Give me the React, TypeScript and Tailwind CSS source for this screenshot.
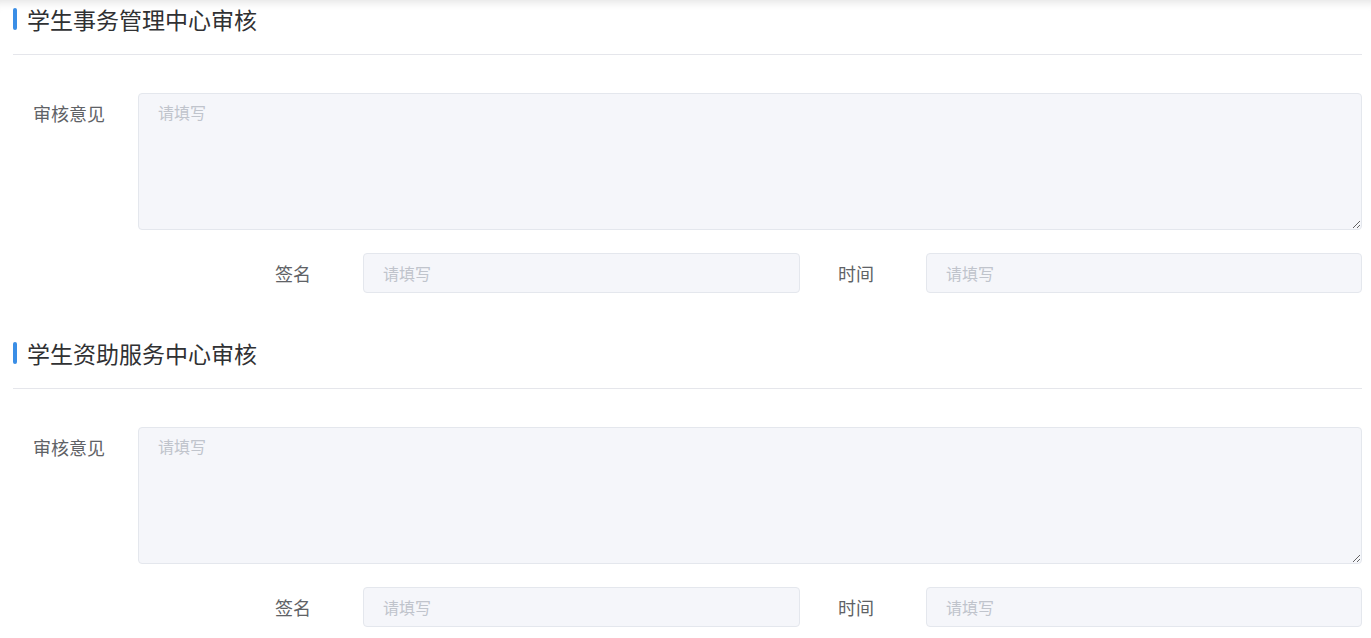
import React from 'react';

const font = { fontFamily: '"Noto Sans CJK SC", "Noto Sans", sans-serif' };

function Field({ label, width }: { label: string; width: string }) {
  return (
    <div className={`flex items-center ${width}`}>
      <div className="w-[88px] text-[18px] text-[#606266]">{label}</div>
      <input
        placeholder="请填写"
        className="flex-1 h-[40px] rounded-[4px] border border-[#e4e7ed] bg-[#f5f6fa] px-[19px] text-[16px] text-[#606266] placeholder:text-[#c0c4cc] outline-none"
      />
    </div>
  );
}

function Section({ title }: { title: string }) {
  return (
    <div>
      <div className="flex items-center h-[38px]">
        <div className="w-[4px] h-[22px] rounded-[2px] bg-[#3a8ee6]" />
        <div className="ml-[10px] text-[23px] text-[#303133]">{title}</div>
      </div>
      <div className="mt-[16px] border-t border-[#e5e6eb]" />

      <div className="mt-[38px] flex">
        <div className="w-[125px] pt-[7px] pl-[20px] text-[18px] text-[#606266]">审核意见</div>
        <textarea
          placeholder="请填写"
          className="flex-1 h-[137px] rounded-[4px] border border-[#e4e7ed] bg-[#f5f6fa] px-[19px] py-[6px] text-[16px] text-[#606266] placeholder:text-[#c0c4cc] outline-none"
        />
      </div>

      <div className="mt-[23px] flex justify-end gap-[38px]">
        <Field label="签名" width="w-[525px]" />
        <Field label="时间" width="w-[524px]" />
      </div>
    </div>
  );
}

export default function App() {
  return (
    <div
      className="min-h-screen bg-white pl-[13px] pr-[9px] shadow-[inset_0_10px_10px_-8px_rgba(0,0,0,0.12)]"
      style={font}
    >
      <div className="flex flex-col gap-[41px]">
        <Section title="学生事务管理中心审核" />
        <Section title="学生资助服务中心审核" />
      </div>
    </div>
  );
}
